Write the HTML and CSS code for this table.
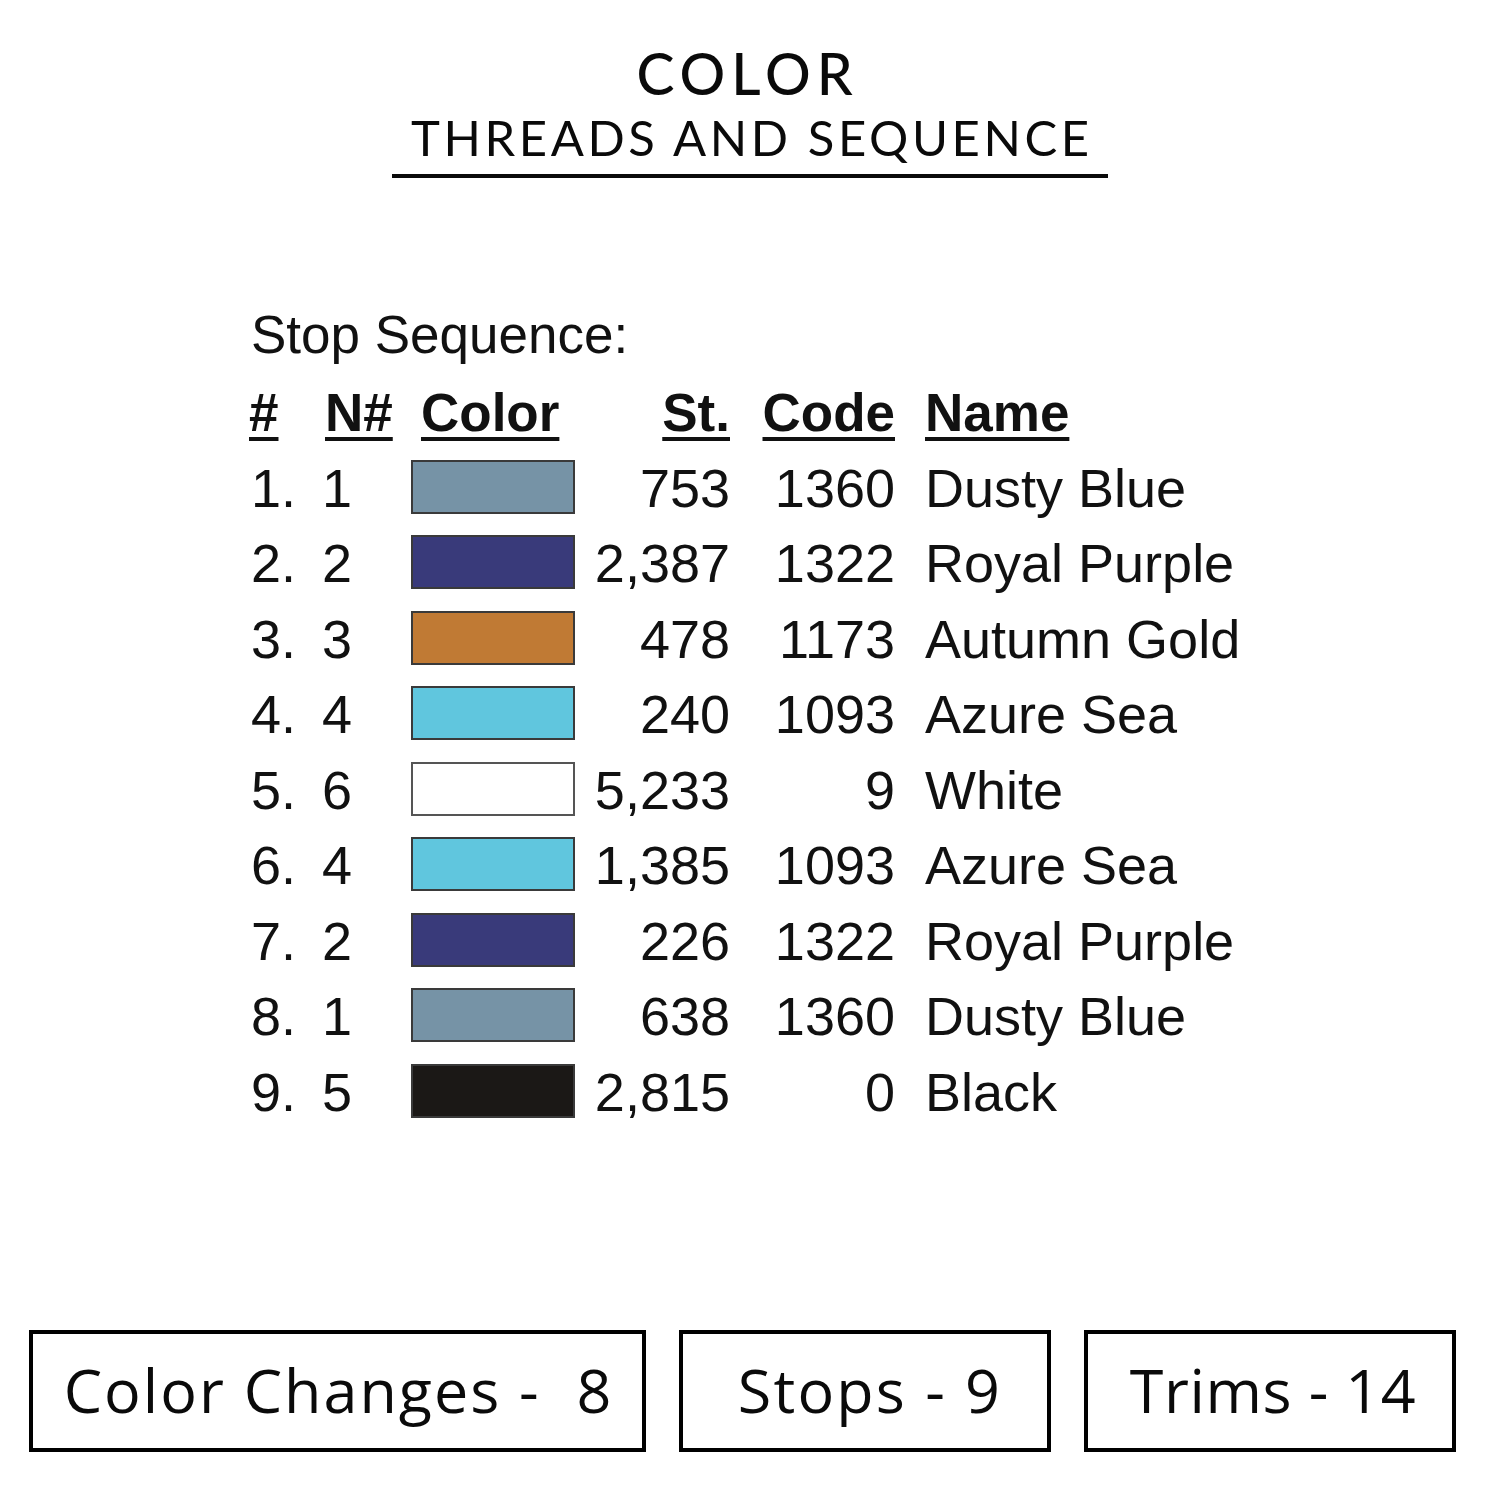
FILE: index.html
```html
<!DOCTYPE html>
<html>
<head>
<meta charset="utf-8">
<link rel="stylesheet" href="styles.css">
</head>
<body>
<div class="page">
  <header class="title">
    <div class="title-main">COLOR</div>
    <div class="title-sub">THREADS AND SEQUENCE</div>
  </header>

  <section class="seq">
    <div class="seq-label">Stop Sequence:</div>
    <div class="grid">
      <div class="th c1"><span>#</span></div>
      <div class="th c2"><span>N#</span></div>
      <div class="th c3"><span>Color</span></div>
      <div class="th c4"><span>St.</span></div>
      <div class="th c5"><span>Code</span></div>
      <div class="th c6"><span>Name</span></div>

      <div class="td c1">1.</div><div class="td c2">1</div><div class="td c3"><div class="sw dusty"></div></div><div class="td c4">753</div><div class="td c5">1360</div><div class="td c6">Dusty Blue</div>
      <div class="td c1">2.</div><div class="td c2">2</div><div class="td c3"><div class="sw purple"></div></div><div class="td c4">2,387</div><div class="td c5">1322</div><div class="td c6">Royal Purple</div>
      <div class="td c1">3.</div><div class="td c2">3</div><div class="td c3"><div class="sw gold"></div></div><div class="td c4">478</div><div class="td c5">1173</div><div class="td c6">Autumn Gold</div>
      <div class="td c1">4.</div><div class="td c2">4</div><div class="td c3"><div class="sw azure"></div></div><div class="td c4">240</div><div class="td c5">1093</div><div class="td c6">Azure Sea</div>
      <div class="td c1">5.</div><div class="td c2">6</div><div class="td c3"><div class="sw white"></div></div><div class="td c4">5,233</div><div class="td c5">9</div><div class="td c6">White</div>
      <div class="td c1">6.</div><div class="td c2">4</div><div class="td c3"><div class="sw azure"></div></div><div class="td c4">1,385</div><div class="td c5">1093</div><div class="td c6">Azure Sea</div>
      <div class="td c1">7.</div><div class="td c2">2</div><div class="td c3"><div class="sw purple"></div></div><div class="td c4">226</div><div class="td c5">1322</div><div class="td c6">Royal Purple</div>
      <div class="td c1">8.</div><div class="td c2">1</div><div class="td c3"><div class="sw dusty"></div></div><div class="td c4">638</div><div class="td c5">1360</div><div class="td c6">Dusty Blue</div>
      <div class="td c1">9.</div><div class="td c2">5</div><div class="td c3"><div class="sw black"></div></div><div class="td c4">2,815</div><div class="td c5">0</div><div class="td c6">Black</div>
    </div>
  </section>

  <footer class="stats">
    <div class="box b1">Color Changes -&nbsp; 8</div>
    <div class="box b2">Stops - 9</div>
    <div class="box b3">Trims - 14</div>
  </footer>
</div>
</body>
</html>
```

FILE: styles.css
```css
html, body {
  margin: 0;
  padding: 0;
  background: #ffffff;
}

.page {
  width: 1500px;
  height: 1500px;
  position: relative;
  color: #000;
  font-family: "Open Sans", "Liberation Sans", sans-serif;
}

.title {
  display: flex;
  flex-direction: column;
  align-items: center;
  padding-top: 45px;
  font-family: Lato, "Open Sans", sans-serif;
}

.title-main {
  font-size: 57px;
  font-weight: 500;
  line-height: 57px;
  letter-spacing: 6px;
  margin-right: 5px;
  color: #0a0a0a;
}

.title-sub {
  margin-top: 11px;
  width: 716px;
  text-align: center;
  font-size: 49px;
  font-weight: 400;
  line-height: 49px;
  letter-spacing: 3.6px;
  text-indent: 3.6px;
  white-space: nowrap;
  padding-bottom: 12px;
  border-bottom: 4px solid #0a0a0a;
  color: #0a0a0a;
}

.seq {
  margin-left: 251px;
  margin-top: 127px;
  font-family: "Liberation Sans", Arial, sans-serif;
  color: #111;
}

.seq-label {
  font-size: 53px;
  line-height: 60px;
}

.grid {
  margin-top: 10px;
  display: grid;
  grid-template-columns: 71px 89px 164px 155px 165px auto;
  grid-auto-rows: 75.5px;
  align-items: center;
  font-size: 54px;
}

.th {
  font-weight: bold;
  line-height: 75.5px;
  font-size: 53px;
}

.th span {
  text-decoration: underline;
  text-decoration-thickness: 4px;
  text-underline-offset: 6px;
}

.th.c1 { margin-left: -2px; }
.th.c2 { margin-left: 3px; }
.th.c3 { padding-left: 10px; }

.td {
  line-height: 75.5px;
  white-space: nowrap;
}

.c4, .c5 { text-align: right; }
.c6 { padding-left: 30px; white-space: nowrap; }

.sw {
  width: 164px;
  height: 54px;
  border: 2px solid #3a3a3a;
  box-sizing: border-box;
  margin-top: -3px;
}

.dusty { background: #7693a6; }
.purple { background: #393a7a; }
.gold { background: #c07a34; }
.azure { background: #60c6de; }
.white { background: #ffffff; border-color: #555; }
.black { background: #1b1816; }

.stats {
  position: absolute;
  left: 0;
  top: 1330px;
  display: flex;
  gap: 33px;
  padding-left: 29px;
}

.box {
  height: 122px;
  box-sizing: border-box;
  border: 4px solid #000;
  display: flex;
  align-items: center;
  justify-content: center;
  font-size: 61px;
  font-weight: 400;
  color: #0a0a0a;
  white-space: nowrap;
  padding-bottom: 4px;
}

.b1 { width: 617px; letter-spacing: 2px; padding-left: 2px; }
.b2 { width: 372px; letter-spacing: 2.2px; padding-left: 10px; }
.b3 { width: 372px; letter-spacing: 0.6px; padding-left: 6px; }
```
